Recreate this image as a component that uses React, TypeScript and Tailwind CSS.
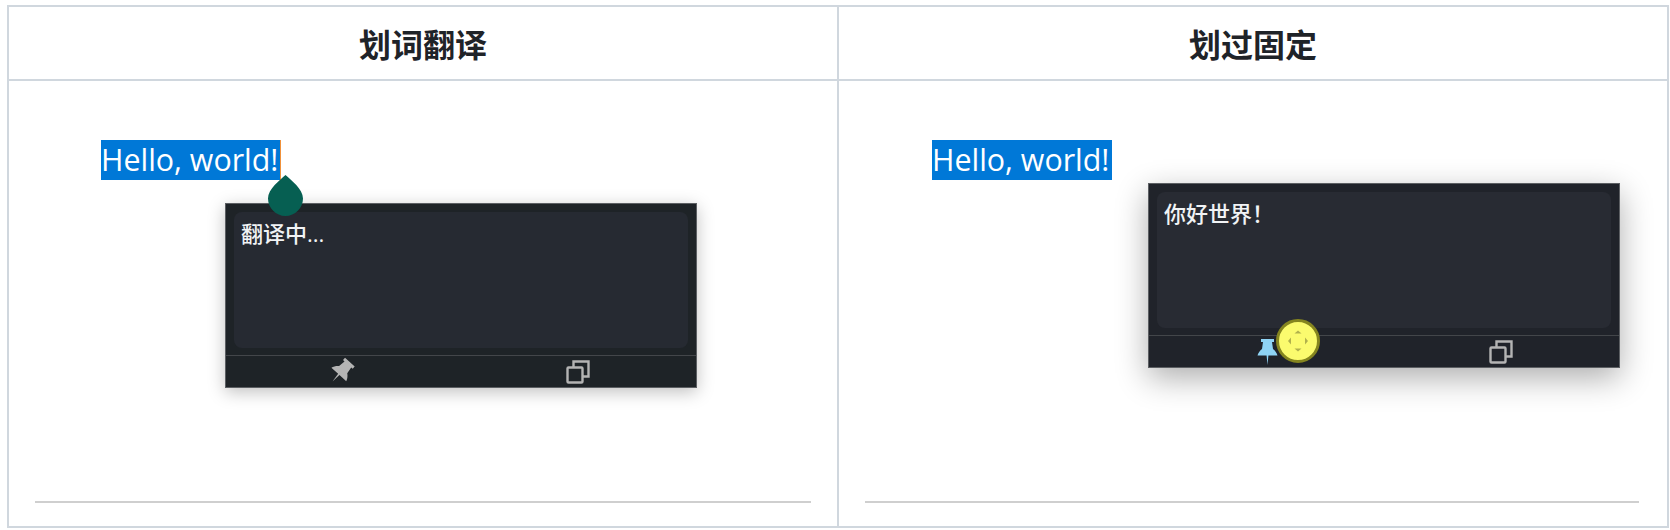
import React from "react";

const uiFont = { fontFamily: '"Open Sans", "Noto Sans CJK SC", sans-serif' };
const headFont = { fontFamily: '"Noto Sans CJK SC", sans-serif' };

const CopyIcon = () => (
  <svg width="24" height="24" viewBox="0 0 24 24" fill="none" stroke="#b4b4b4" strokeWidth="2.4">
    <rect x="1.5" y="7.5" width="15" height="15" rx="1" />
    <path d="M7.5 7.5V1.5H22.5V16.5H16.5" />
  </svg>
);

const PinIcon = ({ color, tilt }: { color: string; tilt?: boolean }) => (
  <svg className={tilt ? "mr-[6px] rotate-[42deg]" : ""} width="21" height="27" viewBox="0 0 21 27" fill={color}>
    <path d="M4 1H17V4H15L16 11C18 12.5 20 15 20.5 17.5H11.4L10.5 27L9.6 17.5H.5C1 15 3 12.5 5 11L6 4H4Z" />
  </svg>
);

const MoveBall = () => (
  <div className="absolute left-[127px] top-[-17px] flex h-[44px] w-[44px] items-center justify-center rounded-full border-[3px] border-[#85851f] bg-[#fbfb6e]">
    <svg width="30" height="30" viewBox="0 0 30 30" fill="#b1b14c">
      <path d="M15 4.5l3.5 3h-7z" />
      <path d="M15 25.5l3.5-3h-7z" />
      <path d="M5 15l3-3.5v7z" />
      <path d="M25 15l-3-3.5v7z" />
    </svg>
  </div>
);

const Popup = ({
  text,
  bar,
  panel,
  shadow,
  pin,
  children,
}: {
  text: string;
  bar: string;
  panel: string;
  shadow: string;
  pin: React.ReactNode;
  children?: React.ReactNode;
}) => (
  <div className={`flex h-[185px] w-[472px] flex-col border border-[#5c5f63] pt-[8px] ${bar} ${shadow}`}>
    <div
      className={`mx-[8px] h-[136px] rounded-[8px] px-[7px] py-[7px] text-[22px] font-medium leading-[28px] text-[#f1f3f5] ${panel}`}
      style={uiFont}
    >
      {text}
    </div>
    <div className="relative mt-[7px] flex flex-1 items-center border-t border-[#43464a]">
      <div className="flex flex-1 justify-center pl-[2px]">{pin}</div>
      <div className="flex flex-1 justify-center pr-[1px]">
        <CopyIcon />
      </div>
      {children}
    </div>
  </div>
);

const Hello = ({ caret }: { caret?: boolean }) => (
  <span
    className={`inline-block h-[40px] w-[180px] whitespace-nowrap bg-[#0078d7] text-[30.4px] leading-[40px] text-white ${caret ? "border-r border-[#f0913a]" : ""}`}
    style={uiFont}
  >
    Hello, world!
  </span>
);

export default function App() {
  return (
    <div className="min-h-[530px] bg-white pl-[7px] pr-[1px] pt-[5px]">
      <div className="h-[523px] border-2 border-[#d0d7de]">
        <div className="grid h-[74px] grid-cols-[830px_1fr] border-b-2 border-[#d0d7de]">
          <div
            className="flex items-center justify-center border-r-2 border-[#d0d7de] text-[32px] font-bold text-[#1f2328]"
            style={headFont}
          >
            划词翻译
          </div>
          <div className="flex items-center justify-center text-[32px] font-bold text-[#1f2328]" style={headFont}>
            划过固定
          </div>
        </div>
        <div className="grid h-[445px] grid-cols-[830px_1fr]">
          {/* Left cell */}
          <div className="flex flex-col border-r-2 border-[#d0d7de] pl-[26px] pr-[26px]">
            <div className="pl-[66px] pt-[59px]">
              <Hello caret />
              <div className="relative ml-[124px] mt-[23px]">
                <svg className="absolute left-[43px] top-[-28px] z-10" width="35" height="41" viewBox="0 0 35 41">
                  <path d="M17.5 0C23 5 35 14 35 23.5C35 33 27 41 17.5 41C8 41 0 33 0 23.5C0 14 12 5 17.5 0Z" fill="#065f52" />
                </svg>
                <Popup
                  text="翻译中..."
                  bar="bg-[#1e2327]"
                  panel="bg-[#262a32]"
                  shadow="shadow-[0_4px_16px_rgba(0,0,0,0.25)]"
                  pin={<PinIcon color="#b4b4b4" tilt />}
                />
              </div>
            </div>
            <div className="mb-[23px] mt-auto h-[2px] bg-[#cfcfcf]" />
          </div>
          {/* Right cell */}
          <div className="flex flex-col pl-[26px] pr-[28px]">
            <div className="pl-[67px] pt-[59px]">
              <div className="flex items-start">
                <Hello />
                <div className="ml-[36px] mt-[43px]">
                  <Popup
                    text="你好世界！"
                    bar="bg-[#20232a]"
                    panel="bg-[#282b33]"
                    shadow="shadow-[0_10px_30px_rgba(0,0,0,0.32)]"
                    pin={<PinIcon color="#8fd4f5" />}
                  >
                    <MoveBall />
                  </Popup>
                </div>
              </div>
            </div>
            <div className="mb-[23px] mt-auto h-[2px] bg-[#cfcfcf]" />
          </div>
        </div>
      </div>
    </div>
  );
}
